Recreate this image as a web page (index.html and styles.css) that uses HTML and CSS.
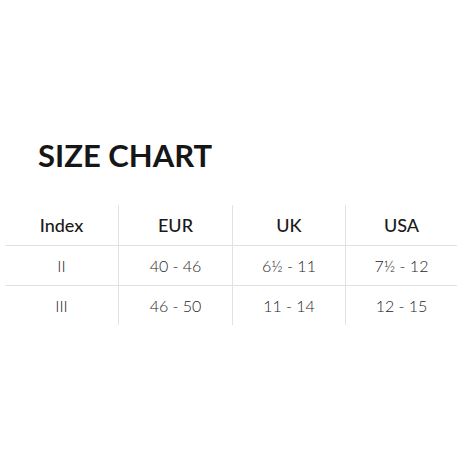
FILE: index.html
```html
<!DOCTYPE html>
<html lang="en">
<head>
<meta charset="utf-8">
<title>Size Chart</title>
<link rel="stylesheet" href="styles.css">
</head>
<body>
<main class="page">
  <h1 class="title">SIZE CHART</h1>
  <div class="chart">
    <div class="cell head">Index</div>
    <div class="cell head sep">EUR</div>
    <div class="cell head sep">UK</div>
    <div class="cell head sep">USA</div>

    <div class="cell row">II</div>
    <div class="cell row sep">40 - 46</div>
    <div class="cell row sep">6½ - 11</div>
    <div class="cell row sep">7½ - 12</div>

    <div class="cell row">III</div>
    <div class="cell row sep">46 - 50</div>
    <div class="cell row sep">11 - 14</div>
    <div class="cell row sep">12 - 15</div>
  </div>
</main>
</body>
</html>
```
FILE: styles.css
```css
html, body {
  margin: 0;
  padding: 0;
  background: #ffffff;
}
body {
  width: 462px;
  height: 462px;
  overflow: hidden;
  font-family: "Lato", "Open Sans", sans-serif;
  color: #1c1c1c;
}
.page {
  padding-top: 137px;
}
.title {
  margin: 0 0 32px 38px;
  font-size: 31px;
  line-height: 36px;
  font-weight: 700;
  letter-spacing: 0;
  color: #161616;
}
.chart {
  margin-left: 5px;
  width: 452px;
  display: grid;
  grid-template-columns: 113px 114px 113px 112px;
}
.cell {
  height: 40px;
  display: flex;
  align-items: center;
  justify-content: center;
  box-sizing: border-box;
}
.sep {
  border-left: 1px solid #e2e2e2;
}
.head {
  font-size: 18px;
  font-weight: 500;
  color: #1a1a1a;
}
.row {
  border-top: 1px solid #e2e2e2;
  font-size: 16px;
  font-weight: 300;
  color: #262626;
}
```
